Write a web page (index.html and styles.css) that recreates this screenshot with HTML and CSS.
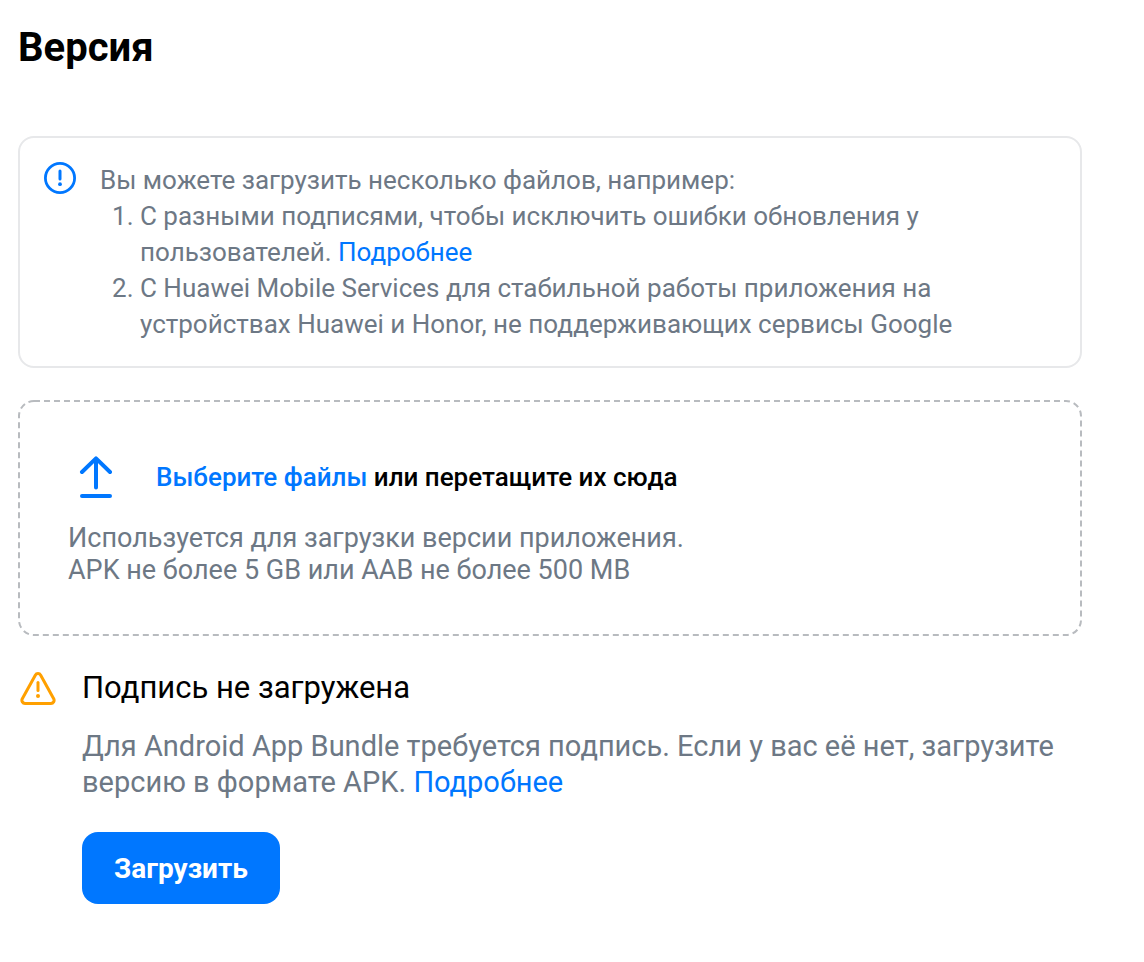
FILE: index.html
```html
<!DOCTYPE html>
<html lang="ru">
<head>
<meta charset="utf-8">
<meta name="viewport" content="width=device-width, initial-scale=1">
<title>Версия</title>
<link rel="stylesheet" href="styles.css">
</head>
<body>
<main class="page">
  <h1 class="title">Версия</h1>

  <section class="notice">
    <svg class="notice-icon" viewBox="0 0 32 32" aria-hidden="true">
      <circle cx="16" cy="16" r="14.6" fill="none" stroke="#0077ff" stroke-width="2.8"/>
      <path d="M16 9v8" fill="none" stroke="#0077ff" stroke-width="3" stroke-linecap="round"/>
      <circle cx="16" cy="22.2" r="1.9" fill="#0077ff"/>
    </svg>
    <div class="notice-body">
      <p class="notice-lead">Вы можете загрузить несколько файлов, например:</p>
      <ol class="notice-list">
        <li>С разными подписями, чтобы исключить ошибки обновления у пользователей. <a class="link" href="#signatures">Подробнее</a></li>
        <li>С Huawei Mobile Services для стабильной работы приложения на устройствах Huawei и Honor, не поддерживающих сервисы Google</li>
      </ol>
    </div>
  </section>

  <section class="dropzone">
    <svg class="dropzone-border" aria-hidden="true"><rect class="dropzone-outline" x="1" y="1" rx="15"/></svg>
    <div class="dropzone-head">
      <svg class="upload-icon" viewBox="0 0 34 42" aria-hidden="true">
        <path d="M17 31.5V3M3 16L17 2.4 31 16M3 40h28" fill="none" stroke="#0077ff" stroke-width="4" stroke-linecap="round" stroke-linejoin="round"/>
      </svg>
      <p class="dropzone-title"><button class="pick" type="button">Выберите файлы</button> или перетащите их сюда</p>
    </div>
    <p class="dropzone-hint">Используется для загрузки версии приложения.<br>APK не более 5 GB или AAB не более 500 MB</p>
  </section>

  <section class="signature">
    <svg class="warning-icon" viewBox="0 0 36 34" aria-hidden="true">
      <path d="M15.3 3.2a3.1 3.1 0 0 1 5.4 0l13 23.6a3.1 3.1 0 0 1-2.7 4.6H5a3.1 3.1 0 0 1-2.7-4.6z" fill="none" stroke="#ffa000" stroke-width="3"/>
      <path d="M18 10.5v8" fill="none" stroke="#ffa000" stroke-width="3" stroke-linecap="round"/>
      <circle cx="18" cy="24" r="2" fill="#ffa000"/>
    </svg>
    <div class="signature-body">
      <h2 class="signature-title">Подпись не загружена</h2>
      <p class="signature-text">Для Android App Bundle требуется подпись. Если у вас её нет, загрузите версию в формате APK. <a class="link" href="#bundle">Подробнее</a></p>
      <button class="upload-button" type="button">Загрузить</button>
    </div>
  </section>
</main>
</body>
</html>
```
FILE: styles.css
```css
* { box-sizing: border-box; }

body {
  margin: 0;
  background: #fff;
  color: #000;
  font-family: Roboto, sans-serif;
}

h1, h2, p, ol { margin: 0; }

.page { padding: 24px 62px 58px 18px; }

.title {
  font-size: 40px;
  line-height: 48px;
  font-weight: 700;
}

.link { color: #0077ff; text-decoration: none; }

.notice {
  display: flex;
  gap: 24px;
  margin-top: 64px;
  padding: 24px;
  border: 2px solid #e7e8ea;
  border-radius: 16px;
}

.notice-icon { flex: none; width: 32px; height: 32px; }

.notice-body {
  max-width: 880px;
  color: #6d7885;
  font-size: 26px;
  line-height: 36px;
}

.notice-list { padding-left: 40px; }

.dropzone {
  position: relative;
  margin-top: 32px;
  padding: 56px 50px 50px;
}

.dropzone-border {
  position: absolute;
  inset: 0;
  width: 100%;
  height: 100%;
}

.dropzone-outline {
  width: calc(100% - 2px);
  height: calc(100% - 2px);
  fill: none;
  stroke: #b8bbbf;
  stroke-width: 2px;
  stroke-dasharray: 6 4;
}

.dropzone-head {
  display: flex;
  align-items: center;
  gap: 43px;
  padding-left: 11px;
}

.upload-icon { flex: none; width: 34px; height: 42px; }

.dropzone-title {
  font-size: 26px;
  line-height: 36px;
  font-weight: 500;
}

.pick {
  position: relative;
  padding: 0;
  border: 0;
  background: none;
  color: #0077ff;
  font: inherit;
  cursor: pointer;
}

.dropzone-hint {
  margin-top: 24px;
  color: #6d7885;
  font-size: 27px;
  line-height: 32px;
}

.signature {
  display: flex;
  gap: 26px;
  margin-top: 32px;
  padding-left: 2px;
}

.warning-icon { flex: none; width: 36px; height: 34px; margin-top: 4px; }

.signature-title {
  font-size: 31px;
  line-height: 40px;
  font-weight: 400;
}

.signature-text {
  margin-top: 20px;
  color: #6d7885;
  font-size: 29px;
  line-height: 36px;
}

.upload-button {
  height: 72px;
  margin-top: 32px;
  padding: 0 32px;
  border: 0;
  border-radius: 16px;
  background: #0077ff;
  color: #fff;
  font-family: inherit;
  font-size: 28px;
  font-weight: 700;
  cursor: pointer;
}
```
